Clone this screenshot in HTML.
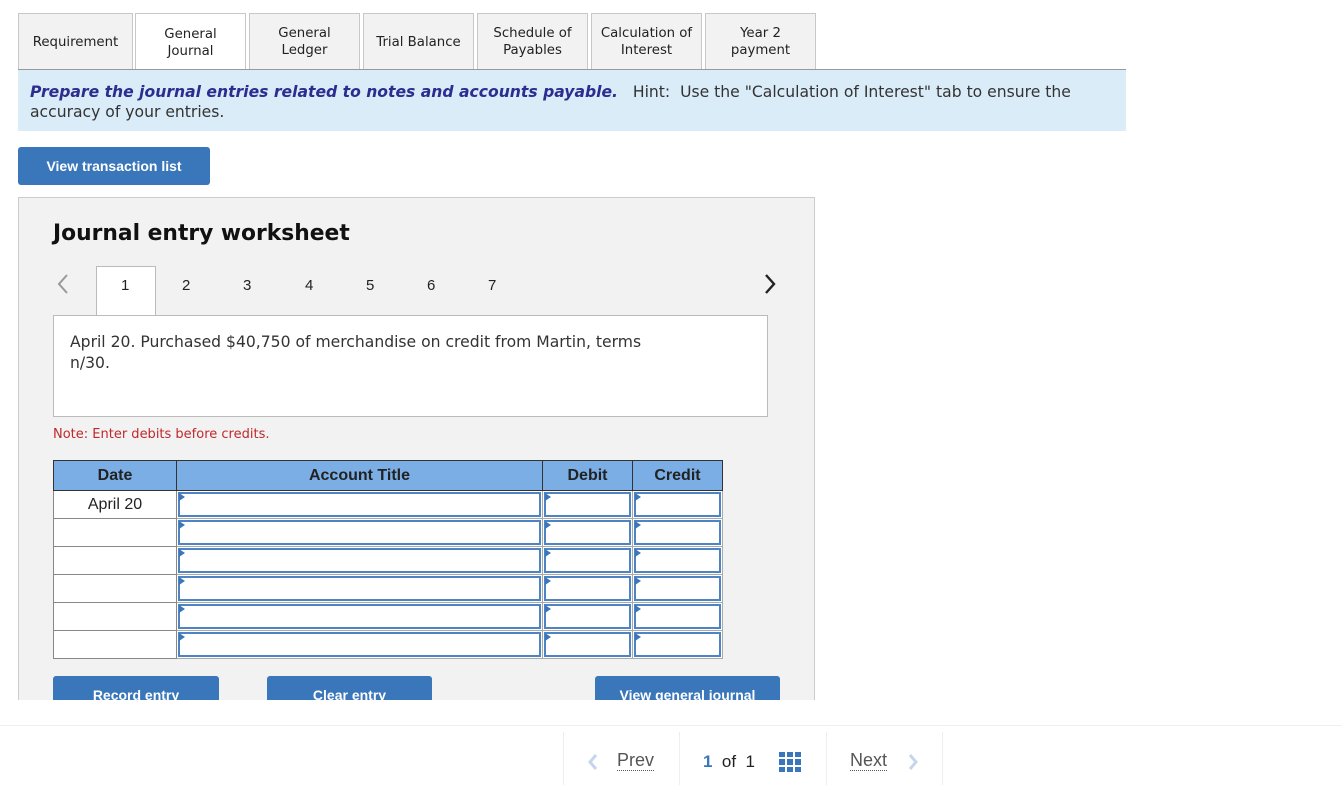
<!DOCTYPE html>
<html><head><style>
*{box-sizing:border-box;margin:0;padding:0}
body{width:1341px;height:792px;background:#fff;font-family:"DejaVu Sans","Liberation Sans",sans-serif;color:#222;position:relative;overflow:hidden}
.a{position:absolute}
.tab{position:absolute;top:13px;height:57px;background:#f2f2f2;border:1px solid #c8c8c8;border-bottom:none;font-size:13.3px;text-align:center;display:flex;align-items:center;justify-content:center;line-height:17px}
.tab.act{background:#fff;height:58px}
.btn{position:absolute;background:#3a76ba;color:#fff;font-family:"Liberation Sans",sans-serif;font-weight:bold;font-size:14px;text-align:center;border-radius:3px}
table{border-collapse:collapse;font-family:"Liberation Sans",sans-serif;font-size:16px}
td,th{border:1px solid #888;height:28px;padding:0}
th{background:#7aaee4;font-weight:bold;color:#222;border-color:#333}
td.in{border:1px solid #aaa;position:relative;background:#fff}
td.in div{position:absolute;left:1px;right:1px;top:1px;bottom:1px;border:2px solid #4f84c4}
td.in div:before{content:"";position:absolute;left:-1px;top:-1px;border-left:6px solid #3a76ba;border-top:4px solid transparent;border-bottom:4px solid transparent}
</style></head><body>
<div class="tab" style="left:18px;width:115px">Requirement</div>
<div class="tab act" style="left:135px;width:111px">General<br>Journal</div>
<div class="tab" style="left:249px;width:111px">General<br>Ledger</div>
<div class="tab" style="left:363px;width:111px">Trial Balance</div>
<div class="tab" style="left:477px;width:111px">Schedule of<br>Payables</div>
<div class="tab" style="left:591px;width:111px">Calculation of<br>Interest</div>
<div class="tab" style="left:705px;width:111px">Year 2<br>payment</div>
<div class="a" style="left:18px;top:69px;width:1108px;height:62px;background:#dbecf9;border-top:1px solid #999;padding:12px 12px;font-size:15.6px;line-height:20px;color:#333"><b style="font-style:italic;color:#2b2d8f">Prepare the journal entries related to notes and accounts payable.</b>&nbsp;&nbsp; Hint:&nbsp; Use the "Calculation of Interest" tab to ensure the accuracy of your entries.</div>
<div class="btn" style="left:18px;top:147px;width:192px;height:38px;line-height:38px">View transaction list</div>
<div class="a" style="left:18px;top:197px;width:797px;height:510px;background:#f2f2f2;border:1px solid #ccc"></div>
<div class="a" style="left:53px;top:221px;font-size:21.8px;font-weight:bold;color:#111">Journal entry worksheet</div>
<svg class="a" style="left:56px;top:273px" width="14" height="22"><path d="M11 2 L3 11 L11 20" fill="none" stroke="#999" stroke-width="2"/></svg>
<svg class="a" style="left:763px;top:273px" width="14" height="22"><path d="M3 2 L11 11 L3 20" fill="none" stroke="#222" stroke-width="2.4"/></svg>
<div class="a" style="left:96px;top:266px;width:60px;height:50px;background:#fff;border:1px solid #bbb;border-bottom:none"></div>
<div class="a" style="top:277px;left:0;font-size:15px;font-family:'Liberation Sans',sans-serif">
<span class="a" style="left:121px">1</span><span class="a" style="left:182px">2</span><span class="a" style="left:243px">3</span><span class="a" style="left:305px">4</span><span class="a" style="left:366px">5</span><span class="a" style="left:427px">6</span><span class="a" style="left:488px">7</span></div>
<div class="a" style="left:53px;top:315px;width:715px;height:102px;background:#fff;border:1px solid #bbb;padding:16px;font-size:15.6px;line-height:21px;color:#333"><div style="width:590px">April 20. Purchased $40,750 of merchandise on credit from Martin, terms n/30.</div></div>
<div class="a" style="left:53px;top:427px;font-size:13px;color:#c0282c">Note: Enter debits before credits.</div>
<table class="a" style="left:53px;top:460px;width:670px">
<tr><th style="width:123px;height:30px">Date</th><th style="width:366px">Account Title</th><th style="width:90px">Debit</th><th style="width:90px">Credit</th></tr>
<tr><td style="text-align:center;background:#fff">April 20</td><td class="in"><div></div></td><td class="in"><div></div></td><td class="in"><div></div></td></tr>
<tr><td style="background:#fff"></td><td class="in"><div></div></td><td class="in"><div></div></td><td class="in"><div></div></td></tr>
<tr><td style="background:#fff"></td><td class="in"><div></div></td><td class="in"><div></div></td><td class="in"><div></div></td></tr>
<tr><td style="background:#fff"></td><td class="in"><div></div></td><td class="in"><div></div></td><td class="in"><div></div></td></tr>
<tr><td style="background:#fff"></td><td class="in"><div></div></td><td class="in"><div></div></td><td class="in"><div></div></td></tr>
<tr><td style="background:#fff"></td><td class="in"><div></div></td><td class="in"><div></div></td><td class="in"><div></div></td></tr>
</table>
<div class="btn" style="left:53px;top:676px;width:166px;height:24px;line-height:38px;overflow:hidden;border-radius:3px 3px 0 0">Record entry</div>
<div class="btn" style="left:267px;top:676px;width:165px;height:24px;line-height:38px;overflow:hidden;border-radius:3px 3px 0 0">Clear entry</div>
<div class="btn" style="left:595px;top:676px;width:185px;height:24px;line-height:38px;overflow:hidden;border-radius:3px 3px 0 0">View general journal</div>
<div class="a" style="left:0;top:700px;width:1341px;height:92px;background:#fff"></div>
<div class="a" style="left:0;top:725px;width:1341px;height:1px;background:#eee"></div>
<div class="a" style="left:563px;top:732px;width:1px;height:53px;background:#eee"></div>
<div class="a" style="left:679px;top:732px;width:1px;height:53px;background:#eee"></div>
<div class="a" style="left:826px;top:732px;width:1px;height:53px;background:#eee"></div>
<div class="a" style="left:942px;top:732px;width:1px;height:53px;background:#eee"></div>
<svg class="a" style="left:587px;top:752px" width="12" height="20"><path d="M9 3 L3 10 L9 17" fill="none" stroke="#c5d6ec" stroke-width="3"/></svg>
<div class="a" style="left:617px;top:751px;font-size:18px;color:#555;font-family:'Liberation Sans';border-bottom:1px dotted #555;line-height:19px">Prev</div>
<div class="a" style="left:703px;top:752px;font-size:17px;font-family:'Liberation Sans'"><b style="color:#3a76ba">1</b>&nbsp; of&nbsp; 1</div>
<div class="a" style="left:779px;top:752px;width:22px;height:20px;display:grid;grid-template-columns:repeat(3,6px);gap:2px">
<i style="background:#3a76ba"></i><i style="background:#3a76ba"></i><i style="background:#3a76ba"></i><i style="background:#3a76ba"></i><i style="background:#3a76ba"></i><i style="background:#3a76ba"></i><i style="background:#3a76ba"></i><i style="background:#3a76ba"></i><i style="background:#3a76ba"></i></div>
<div class="a" style="left:850px;top:751px;font-size:18px;color:#555;font-family:'Liberation Sans';border-bottom:1px dotted #555;line-height:19px">Next</div>
<svg class="a" style="left:907px;top:752px" width="12" height="20"><path d="M3 3 L9 10 L3 17" fill="none" stroke="#c5d6ec" stroke-width="3"/></svg>
</body></html>
